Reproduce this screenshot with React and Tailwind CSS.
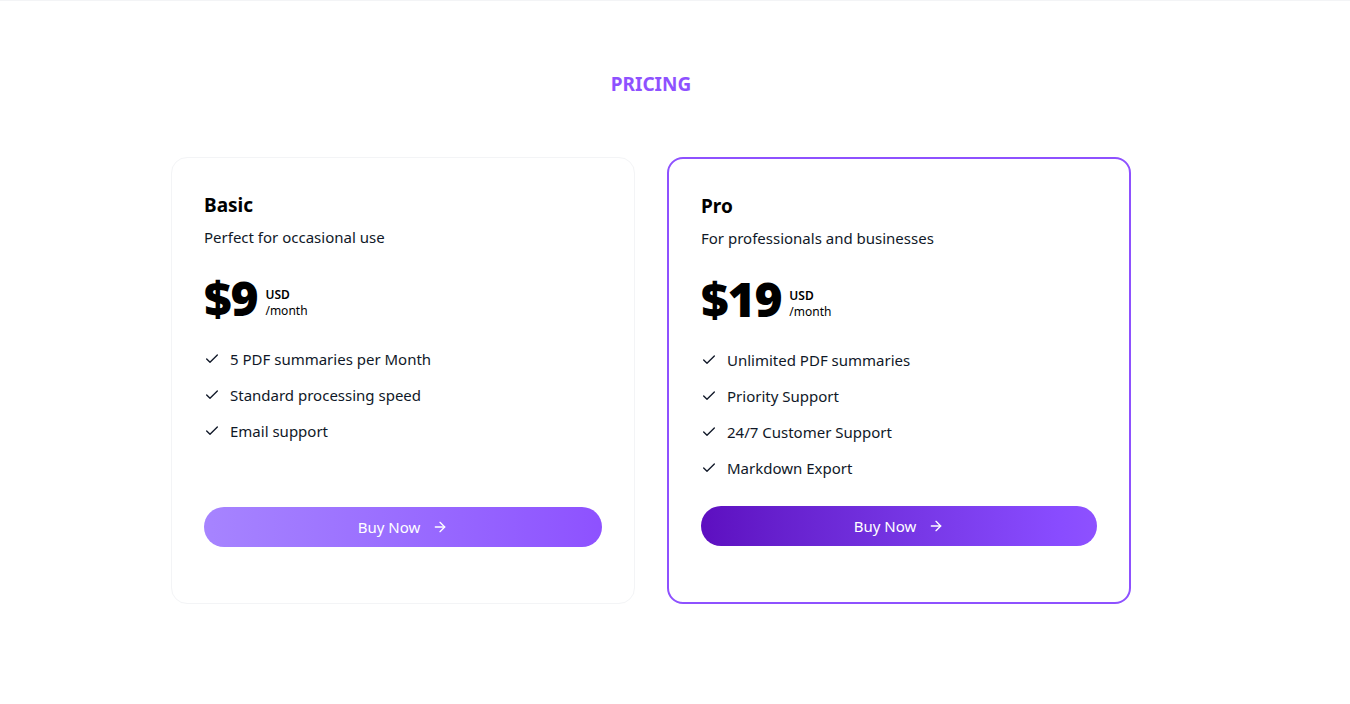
import { ArrowRight, Check } from "lucide-react";

const plans = [
  {
    name: "Basic",
    description: "Perfect for occasional use",
    price: 9,
    features: ["5 PDF summaries per Month", "Standard processing speed", "Email support"],
    highlight: false,
  },
  {
    name: "Pro",
    description: "For professionals and businesses",
    price: 19,
    features: ["Unlimited PDF summaries", "Priority Support", "24/7 Customer Support", "Markdown Export"],
    highlight: true,
  },
];

const PricingCard = ({ plan }) => {
  return (
    <div
      className={
        plan.highlight
          ? "flex flex-col rounded-2xl border-2 border-violet-500 bg-white px-8 pt-8 pb-14"
          : "flex flex-col rounded-2xl border border-gray-100 bg-white px-8 pt-8 pb-14"
      }
    >
      <h3 className="mt-px text-[19px] leading-7 font-bold text-black">{plan.name}</h3>
      <p className="mt-[6px] text-[15px] leading-6 text-gray-900">{plan.description}</p>

      <div className="mt-[25px] flex items-center gap-2">
        <span className="text-5xl leading-none font-black tracking-tight text-black">${plan.price}</span>
        <div className="flex flex-col pt-[10px] text-xs leading-4 text-black">
          <span className="font-semibold">USD</span>
          <span>/month</span>
        </div>
      </div>

      <ul className="mt-[25px] flex flex-col gap-3">
        {plan.features.map((feature) => (
          <li key={feature} className="flex items-center gap-2.5 text-[15px] leading-6 text-gray-900">
            <Check className="h-4 w-4 shrink-0" strokeWidth={2} />
            <span>{feature}</span>
          </li>
        ))}
      </ul>

      <div className="mt-auto pt-[26px]">
        <button
          type="button"
          className={
            plan.highlight
              ? "flex h-10 w-full items-center justify-center gap-2 rounded-full bg-gradient-to-r from-violet-800 to-violet-500 text-[15px] text-white"
              : "flex h-10 w-full items-center justify-center gap-2 rounded-full bg-gradient-to-r from-violet-400 to-violet-500 text-[15px] text-white"
          }
        >
          Buy Now
          <ArrowRight className="ml-1 h-4 w-4" strokeWidth={2} />
        </button>
      </div>
    </div>
  );
};

const App = () => {
  return (
    <section
      className="min-h-screen border-t border-gray-100 bg-white pr-12"
      style={{ fontFamily: '"Noto Sans", "Open Sans", sans-serif' }}
    >
      <div className="flex flex-col items-center pt-[69px]">
        <h2 className="text-[19px] leading-7 font-bold uppercase text-violet-500">Pricing</h2>

        <div className="mt-[59px] grid w-[960px] grid-cols-2 gap-8">
          {plans.map((plan) => (
            <PricingCard key={plan.name} plan={plan} />
          ))}
        </div>
      </div>
    </section>
  );
};

export default App;
